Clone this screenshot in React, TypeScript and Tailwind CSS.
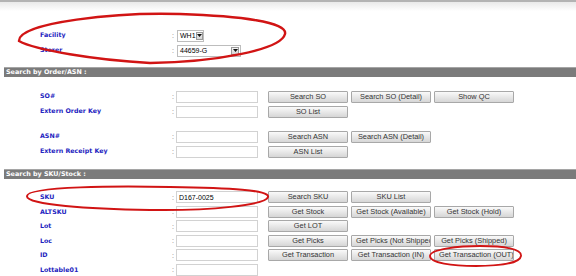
import React from "react";

const labelCls =
  "w-[172px] shrink-0 pl-[40px] font-['DejaVu_Sans',sans-serif] font-bold text-[6.3px] leading-none text-[#2323c0] whitespace-nowrap";
const colonCls =
  "w-[4px] shrink-0 font-['Liberation_Sans',Arial,sans-serif] text-[7px] leading-none text-[#777]";
const btnCls =
  "h-[12px] w-[80px] shrink-0 overflow-hidden whitespace-nowrap rounded-[1px] border border-[#a8a8a8] bg-linear-to-b from-[#fafafa] to-[#d6d6d6] px-[4px] text-center font-['Liberation_Sans',Arial,sans-serif] text-[7.4px] leading-[10px] text-[#333]";

function Btn({ t }: { t: string }) {
  return <div className={btnCls}>{t}</div>;
}

function Row({
  label,
  value,
  buttons,
  h,
}: {
  label: string;
  value?: string;
  buttons: string[];
  h: string;
}) {
  return (
    <div className={`flex items-center ${h}`}>
      <div className={labelCls}>{label}</div>
      <div className={colonCls}>:</div>
      <div className="flex h-[12px] w-[82px] shrink-0 items-center border border-[#d2d2d2] bg-white pl-[2px] font-['Liberation_Sans',Arial,sans-serif] text-[7px] leading-none text-black">
        {value}
      </div>
      <div className="ml-[10px] flex gap-[3px]">
        {buttons.map((b) => (
          <Btn key={b} t={b} />
        ))}
      </div>
    </div>
  );
}

function Select({ value, w }: { value: string; w: string }) {
  return (
    <div
      className={`flex h-[12px] ${w} items-center justify-between border border-[#bdbdbd] bg-white pl-[2px] pr-[1px] font-['Liberation_Sans',Arial,sans-serif] text-[7px] leading-none text-black`}
    >
      <span>{value}</span>
      <div className="flex h-[8px] w-[8px] items-center justify-center border border-[#9a9a9a] bg-linear-to-b from-[#f4f4f4] to-[#d4d4d4]">
        <svg width="5" height="3" viewBox="0 0 5 3">
          <path d="M0 0 L5 0 L2.5 3 Z" fill="#111" />
        </svg>
      </div>
    </div>
  );
}

function Header({ t }: { t: string }) {
  return (
    <div className="ml-[4px] flex h-[10px] items-center border-t border-[#a5a5a5] bg-[#7b7b7b] pl-[2px] font-['DejaVu_Sans',sans-serif] text-[6.4px] font-bold leading-none text-white">
      {t}
    </div>
  );
}

export default function App() {
  return (
    <div className="relative h-[276px] w-[576px] overflow-hidden bg-white">
      <div className="h-[2px] bg-[#b3b3b3]" />
      <div className="h-[9px] bg-linear-to-b from-[#e9e9e9] to-white" />
      <div className="h-[17px]" />
      {/* Facility / Storer */}
      <div className="flex h-[15px] items-center">
        <div className={labelCls}>Facility</div>
        <div className={colonCls}>:</div>
        <div className="ml-[1px]">
          <Select value="WH1" w="w-[27px]" />
        </div>
      </div>
      <div className="flex h-[15px] items-center">
        <div className={labelCls}>Storer</div>
        <div className={colonCls}>:</div>
        <div className="ml-[1px]">
          <Select value="44659-G" w="w-[64px]" />
        </div>
      </div>
      <div className="h-[9px]" />
      <Header t="Search by Order/ASN :" />
      <div className="h-[12px]" />
      <Row
        h="h-[15px]"
        label="SO#"
        buttons={["Search SO", "Search SO (Detail)", "Show QC"]}
      />
      <Row h="h-[15px]" label="Extern Order Key" buttons={["SO List"]} />
      <div className="h-[10px]" />
      <Row
        h="h-[15px]"
        label="ASN#"
        buttons={["Search ASN", "Search ASN (Detail)"]}
      />
      <Row h="h-[15px]" label="Extern Receipt Key" buttons={["ASN List"]} />
      <div className="h-[10px]" />
      <Header t="Search by SKU/Stock :" />
      <div className="h-[11px]" />
      <Row
        h="h-[14.5px]"
        label="SKU"
        value="D167-0025"
        buttons={["Search SKU", "SKU List"]}
      />
      <Row
        h="h-[14.5px]"
        label="ALTSKU"
        buttons={["Get Stock", "Get Stock (Available)", "Get Stock (Hold)"]}
      />
      <Row h="h-[14.5px]" label="Lot" buttons={["Get LOT"]} />
      <Row
        h="h-[14.5px]"
        label="Loc"
        buttons={["Get Picks", "Get Picks (Not Shipped)", "Get Picks (Shipped)"]}
      />
      <Row
        h="h-[14.5px]"
        label="ID"
        buttons={[
          "Get Transaction",
          "Get Transaction (IN)",
          "Get Transaction (OUT)",
        ]}
      />
      <Row h="h-[14.5px]" label="Lottable01" buttons={[]} />

      <svg
        className="pointer-events-none absolute inset-0"
        width="576"
        height="276"
        viewBox="0 0 576 276"
      >
        <g fill="none" stroke="#d11414" strokeLinecap="round">
          <path
            d="M19 41 C 18 22, 120 12, 180 14 C 240 16, 288 22, 285 34 C 281 50, 215 62, 150 63 C 95 60, 35 50, 19 41 Z"
            strokeWidth="2.4"
          />
          <path
            d="M27 196 C 28 186, 120 186, 170 187 C 230 188, 270 190, 268 197 C 266 205, 210 211, 150 210 C 90 209, 26 205, 27 196 Z"
            strokeWidth="2"
          />
          <path
            d="M430 256 C 430 249, 460 246, 480 246 C 505 246, 522 249, 521 256 C 520 263, 500 266, 476 266 C 452 266, 430 263, 430 256 Z"
            strokeWidth="1.8"
          />
        </g>
      </svg>
    </div>
  );
}
